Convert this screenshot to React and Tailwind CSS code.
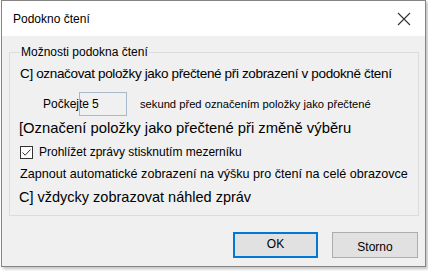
import React from 'react';

const font = { fontFamily: '"Liberation Sans", Arial, sans-serif' };

const App = () => {
  return (
    <div className="w-[428px] h-[271px] bg-white overflow-hidden" style={font}>
      <div className="ml-[1px] w-[425px] h-[267px] border border-[#858585] bg-[#f0f0f0] flex flex-col shadow-[2px_2px_3px_rgba(0,0,0,0.25)]">
        {/* title bar */}
        <div className="h-[35px] shrink-0 bg-white flex items-center justify-between pl-[11px] pr-[14px]">
          <span className="text-[12px] text-black">Podokno čtení</span>
          <svg width="14" height="14" viewBox="0 0 14 14" className="text-[#333]">
            <path d="M1 1 L13 13 M13 1 L1 13" stroke="currentColor" strokeWidth="1.1" fill="none" />
          </svg>
        </div>

        {/* group box */}
        <div className="relative shrink-0 mt-[16px] ml-[7px] mr-[6px] h-[164px] border border-[#dcdcdc] pl-[10px] pt-[12px] text-black whitespace-nowrap">
          <span className="absolute left-[10px] -top-[8px] bg-[#f0f0f0] px-[1px] text-[12px] leading-[14px]">
            Možnosti podokna čtení
          </span>

          <div className="h-[18px] flex items-center text-[13.5px] tracking-[-0.35px]">
            C] označovat položky jako přečtené při zobrazení v podokně čtení
          </div>

          <div className="flex items-center mt-[9px] h-[24px]">
            <span className="shrink-0 ml-[23px] w-[36px] text-[12px] overflow-visible">Počkejte</span>
            <div className="shrink-0 w-[48px] h-[24px] border border-[#a9b8c9] flex items-center pl-[12px] text-[12px]">5</div>
            <span className="shrink-0 ml-[13px] text-[11.2px]">sekund před označením položky jako přečtené</span>
          </div>

          <div className="h-[18px] mt-[3px] flex items-center text-[14.8px] -ml-[1px]">
            [Označení položky jako přečtené při změně výběru
          </div>

          <div className="flex items-center mt-[8px] h-[14px]">
            <span className="shrink-0 w-[13px] h-[13px] border border-[#333] bg-white flex items-center justify-center">
              <svg width="11" height="11" viewBox="0 0 11 11">
                <path d="M1.5 5.5 L4.2 8.2 L9.5 2.5" stroke="#333" strokeWidth="1" fill="none" />
              </svg>
            </span>
            <span className="ml-[6px] text-[12px]">Prohlížet zprávy stisknutím mezerníku</span>
          </div>

          <div className="h-[14px] mt-[8px] flex items-center text-[12.6px]">
            Zapnout automatické zobrazení na výšku pro čtení na celé obrazovce
          </div>

          <div className="h-[17px] mt-[8px] flex items-center text-[14.5px] -ml-[1px]">
            C] vždycky zobrazovat náhled zpráv
          </div>
        </div>

        {/* buttons */}
        <div className="flex justify-end gap-[14px] mt-[16px] mr-[7px]">
          <button className="w-[85px] h-[26px] bg-[#e1e1e1] border-2 border-[#0078d7] text-[12px] text-black leading-none pb-[2px]">
            OK
          </button>
          <button className="w-[86px] h-[26px] bg-[#e1e1e1] border border-[#adadad] text-[12px] text-black leading-none pt-[4px]">
            Storno
          </button>
        </div>
      </div>
    </div>
  );
};

export default App;
